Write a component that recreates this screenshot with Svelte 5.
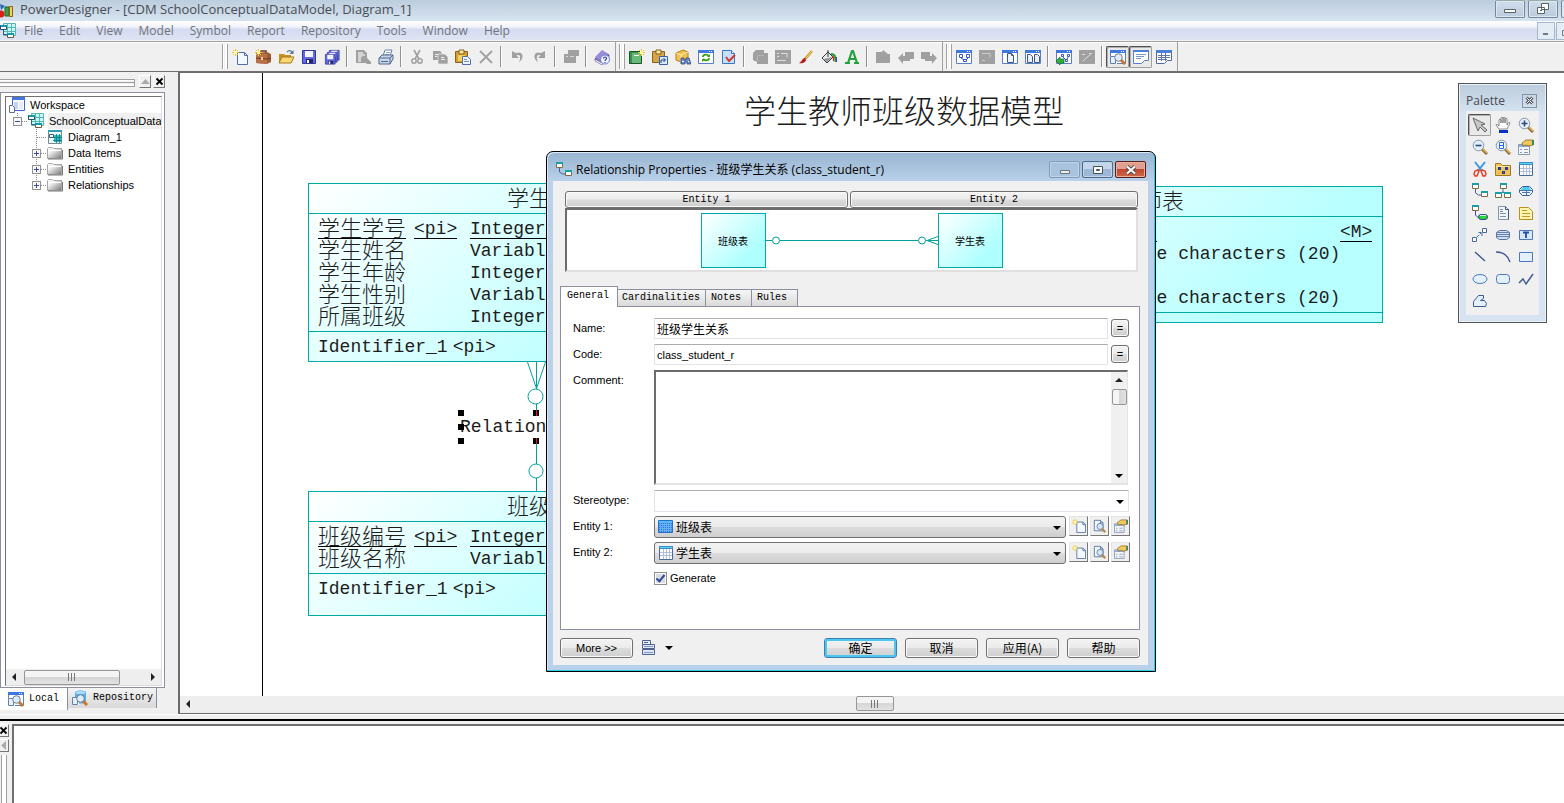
<script>
  const menus = ['File', 'Edit', 'View', 'Model', 'Symbol', 'Report', 'Repository', 'Tools', 'Window', 'Help'];

  const bands = [
    [['new', 'briefcase', 'open', 'save', 'saveAll'], ['preview', 'print'], ['cut', 'copy', 'paste', 'delete'], ['undo', 'redo'], ['props'], ['help']],
    [['model', 'pasteLink', 'find', 'refresh', 'check'], ['shapes', 'image', 'brush', 'fill', 'font'], ['parent', 'back', 'forward']],
    [['diagram', 'grayWin', 'page', 'pages'], ['mapping', 'grayMap'], ['browser', 'output', 'results']]
  ];
  const pressed = ['browser', 'output', 'pointer'];

  const tools = [
    'pointer', 'hand', 'zoomIn', 'zoomOut', 'zoomFit', 'properties', 'scissors', 'package', 'table',
    'relation', 'inherit', 'association', 'assocLink', 'file', 'note', 'link', 'title', 'text',
    'line', 'arc', 'rect', 'ellipse', 'round', 'polyline', 'polygon'
  ];

  const tree = [
    { label: 'Workspace', icon: 'workspace', depth: 0 },
    { label: 'SchoolConceptualDataModel', icon: 'cdm', depth: 1, box: '-', selected: true },
    { label: 'Diagram_1', icon: 'diagramNode', depth: 2 },
    { label: 'Data Items', icon: 'folder', depth: 2, box: '+' },
    { label: 'Entities', icon: 'folder', depth: 2, box: '+' },
    { label: 'Relationships', icon: 'folder', depth: 2, box: '+', last: true }
  ];

  const entities = [
    { cls: 'student', name: '学生表', id: true, rows: [['学生学号', '<pi>', 'Integer', ''], ['学生姓名', '', 'Variable', ''], ['学生年龄', '', 'Integer', ''], ['学生性别', '', 'Variable', ''], ['所属班级', '', 'Integer', '']] },
    { cls: 'class', name: '班级表', id: true, rows: [['班级编号', '<pi>', 'Integer', ''], ['班级名称', '', 'Variable', '']] },
    { cls: 'teacher', name: '教师表', id: false, rows: [['', '', 'Integer', '<M>'], ['', '', 'Variable characters (20)', ''], ['', '', 'Integer', ''], ['', '', 'Variable characters (20)', '']] }
  ];

  const tabs = ['General', 'Cardinalities', 'Notes', 'Rules'];
  const actions = ['确定', '取消', '应用(A)', '帮助'];

  let name = $state('班级学生关系');
  let code = $state('class_student_r');
  let comment = $state('');
  let generate = $state(true);

  const star = '<path d="M3.5 0v7M0 3.5h7M1 1l5 5M6 1l-5 5" stroke="#f0c430"/><path d="M2 2h3v3H2z" fill="#fff8b0"/>';
  const win = '<path d="M.5 1.5h15v13H.5z" fill="#fff" stroke="#5a7fc8"/><path d="M0 1h16v3H0z" fill="#3f77e0"/><path d="M11 2.500h1M13 2.500h1" stroke="#fff"/>';
  const lens = (inner) => `<path d="M10 10l5 5" stroke="#8a6a3a" stroke-width="3"/><path d="M11 10l4 4" stroke="#f0b850" stroke-width="1.4"/><circle cx="6.5" cy="6.5" r="5.3" fill="#e2f0fd" stroke="#8a94a8"/>${inner}`;
  const sheet = '<path d="M.5.5h7l3 3v9H.5z" fill="#f4f8ff" stroke="#5070a8"/><path d="M7.5.5v3h3" fill="none" stroke="#5070a8"/>';
  const disk = '<path d="M.5.5h13v13H.5z" fill="#6468e0" stroke="#34389c"/><path d="M3 1h8v6H3z" fill="#f4f4ff"/><path d="M4 9h7v4H4z" fill="#20286c"/><path d="M5 10h2v3H5z" fill="#fff"/>';
  const box = (x, y) => `<path d="M${x}.5 ${y}.5h6v5h-6z" fill="#fff" stroke="#7c6c48"/><path d="M${x} ${y}h7v2h-7z" fill="#18a0a8"/>`;
  const card = '<path d="M.5 5.500h11v10H.5z" fill="#f4f8fc" stroke="#8898b0"/><path d="M1 6h11v2H1z" fill="#8cacdc"/><path d="M2 10.500h2M6 10.500h4M2 13.500h2M6 13.500h4" stroke="#8a9ab6"/><path d="M4 4l4-3h7v5l-4 1-3-1-3 1z" fill="#f0c860" stroke="#8a6418" stroke-width=".8"/><path d="M14 1h2v5h-2z" fill="#3a8a58"/>';
  const browse = '<path d="M0 7h7v8H0z" fill="#fff"/><path d="M.5 7.500h5v7h-5z" fill="#e8f0fc" stroke="#6080b0"/><path d="M11 11l4 4" stroke="#c87820" stroke-width="3"/><circle cx="8.500" cy="8.500" r="3.800" fill="#dcecfc" stroke="#707c90"/>';

  const icons = {
    new: `<g transform="translate(5 3)">${sheet}</g>${star}`,
    briefcase: `<path d="M6 4V2h5v2" fill="none" stroke="#6c3c20" stroke-width="1.500"/><path d="M1 4l11-1 4 2v8l-4 2-11-1z" fill="#a05c34"/><path d="M1 4l11 1v10L1 14z" fill="#b87048"/><path d="M1 9l11 1 4-1" stroke="#6c3820" fill="none"/><path d="M6 8h2v3H6z" fill="#f0d090"/>${star}`,
    open: '<path d="M1 14V5h5l1 1h6v8z" fill="#c89020"/><path d="M1 14l3-6h12l-3 6z" fill="#ffd874" stroke="#a87818"/><path d="M9 3c2-2 4-2 5 1" stroke="#5a7898" fill="none" stroke-width="1.300"/><path d="M15.500 1v4h-4z" fill="#5a7898"/>',
    save: `<g transform="translate(1 1)">${disk}</g>`,
    saveAll: `<g transform="translate(5 1) scale(.75)">${disk}</g><g transform="translate(3 3) scale(.75)">${disk}</g><g transform="translate(1 5) scale(.75)">${disk}</g>`,
    preview: '<path d="M1 1h8l3 3v5l4 4v2h-4l-1-1H1z" fill="#a0a0a0"/><path d="M3 3h5v2h2v2l-4 3v3H3z" fill="#d4d4d4"/><circle cx="9" cy="10" r="3" fill="#a0a0a0"/>',
    print: '<path d="M5 7l2-6h7l-2 6z" fill="#fff" stroke="#6880a8"/><path d="M8 3.500h4M7 5.500h4" stroke="#90a8d0"/><path d="M1 9l3-3h11v4l-3 5H1z" fill="#c8d8ec" stroke="#50688c"/><path d="M1 9h11l3-3M12 9v6M3 12.500h7" stroke="#50688c" fill="none"/>',
    cut: '<path d="M5 1l5 9M11 1L6 10" stroke="#a0a0a0" stroke-width="1.600"/><circle cx="5" cy="12" r="2.200" fill="none" stroke="#a0a0a0" stroke-width="1.500"/><circle cx="11" cy="12" r="2.200" fill="none" stroke="#a0a0a0" stroke-width="1.500"/>',
    copy: '<path d="M1 2h7l2 2v7H1z" fill="#a0a0a0"/><path d="M6 5h7l3 3v7H6z" fill="#a0a0a0" stroke="#eee" stroke-width=".7"/><path d="M3 5.500h3M3 7.500h2M9 8.500h3M9 10.500h4" stroke="#eee"/>',
    paste: '<path d="M.5 2.500h12v11H.5z" fill="#d89c30" stroke="#8c6418"/><path d="M4 1h5v4H4z" fill="#f8e8a0" stroke="#806020"/><path d="M3 6h7v6H3z" fill="#f8d060"/><path d="M7.500 7.500h5l3 3v5h-8z" fill="#eef4ff" stroke="#5070a8"/><path d="M9 10.500h3M9 12.500h5" stroke="#7890c0"/>',
    delete: '<path d="M2 2l12 12M14 2L2 14" stroke="#a0a0a0" stroke-width="1.800"/>',
    undo: '<path d="M3 2v7h7L7.500 6.500c3-1.500 5 1 2.500 7 6-5 4-12-3-9.500z" fill="#a0a0a0"/>',
    redo: '<path d="M13 2v7H6l2.500-2.500c-3-1.500-5 1-2.500 7-6-5-4-12 3-9.500z" fill="#a0a0a0"/>',
    props: '<path d="M5 1h11v6h-3v7H1V5h4z" fill="#a0a0a0"/><path d="M3 7.500h2M7 7.500h4" stroke="#d8d8d8"/>',
    help: '<path d="M1 10l7-8 7 4-7 9z" fill="#8a78c8" stroke="#584890"/><path d="M1 10l7 4 7-8v2l-7 8-7-4z" fill="#fff" stroke="#584890" stroke-width=".6"/><path d="M1 8l7-7 6 4-6 7z" fill="#9c8cd8"/><circle cx="11" cy="10.500" r="4.500" fill="#f4f4ff" stroke="#6480d0"/><path d="M9.500 9.500c0-2 3-2 3 0 0 1-1.500 1-1.500 2.500M11 13v1" stroke="#2440a8" fill="none" stroke-width="1.200"/>',
    model: `<path d="M.5 2.500h12v12H.5z" fill="#389050" stroke="#185828"/><path d="M3 4h9v10H3z" fill="#68b878"/><path d="M5 6.500h5" stroke="#fff"/><g transform="translate(9 0)">${star}</g>`,
    pasteLink: '<path d="M.5 2.500h12v11H.5z" fill="#d8a448" stroke="#8c6418"/><path d="M4 1h5v4H4z" fill="#f8e8a0" stroke="#806020"/><path d="M7.500 7.500h8v8h-8z" fill="#dce8fc" stroke="#3c60a8"/><path d="M9 14v-3h4M11.500 9l2 2-2 2" stroke="#143c98" fill="none"/>',
    find: '<path d="M1 4l7-3 5 2v7l-7 3-5-2z" fill="#f4c050" stroke="#b88020"/><path d="M1 4l5 2 7-3M6 6v7" stroke="#fff0a8" fill="none"/><path d="M6 9h3v2h2V9h3l2 6h-4v-2h-2v2H6z" fill="#6c90d0" stroke="#20386c" stroke-width=".7"/><path d="M7 12.500h2M13 12.500h1" stroke="#fff"/>',
    refresh: `${win}<path d="M5 8c0-3 4-3 6-1M11 9c0 3-4 3-6 1" stroke="#38a018" stroke-width="1.800" fill="none"/><path d="M12 5v3H9zM4 13v-3h3z" fill="#38a018"/>`,
    check: '<path d="M1.500 1.500h9l3 3v10h-12z" fill="#c4e0fc" stroke="#3878c8"/><path d="M10.500 1.500v3h3" fill="#fff" stroke="#3878c8"/><path d="M5 8l3 4 6-6" stroke="#d03828" stroke-width="2" fill="none"/>',
    shapes: '<path d="M4 1h8v3h4v11H5v-2L1 11V4z" fill="#a0a0a0"/><path d="M5.500 13V6.500h6" fill="none" stroke="#b8b8b8"/>',
    image: '<path d="M0 1h16v14H0z" fill="#a0a0a0"/><path d="M2 4.500h2M2 7.500h2M2 11.500h9M6 4.500h6v4" stroke="#ddd" fill="none"/>',
    brush: '<path d="M14 2l-7 8" stroke="#c89020" stroke-width="2.600"/><path d="M14 2l-6 7" stroke="#f8d878"/><path d="M7 9c-3 0-3 4-6 5 3 1 7-1 7-3z" fill="#b81c14"/>',
    fill: '<path d="M1 9l6-6 5 5-6 6z" fill="#e8ecf0" stroke="#383838"/><path d="M7 8V1" stroke="#383838"/><path d="M2 10l5-1 4-1-5 5z" fill="#909898"/><path d="M10 5c4 0 5 3 4.500 8" stroke="#20a038" stroke-width="2" fill="none"/><path d="M11 7c2 1 2 3 1.500 5" stroke="#d02020" stroke-width="1.400" fill="none"/><path d="M15.500 8v5" stroke="#2848d0"/>',
    font: '<path d="M1 14h5M10 14h5M4 14l4-12h1l4 12M5.500 10h6" stroke="#28a040" stroke-width="2.200" fill="none"/>',
    parent: '<path d="M1 3h6l1-2 5 4h2v9H1z" fill="#a0a0a0"/>',
    back: '<path d="M0 9l5-5v3h2V3h9v7h-4v2H5v3z" fill="#a0a0a0"/>',
    forward: '<path d="M16 9l-5-5v3H9V3H0v7h4v2h7v3z" fill="#a0a0a0"/>',
    diagram: `${win}<path d="M3.500 5.500h3v3h-3zM10.500 5.500h3v3h-3zM7.500 10.500h3v2h-3zM5 9l3 2M12 9l-2 2" fill="#fff" stroke="#3858c8"/>`,
    grayWin: '<path d="M0 1h16v14H0z" fill="#a0a0a0"/><path d="M3 4.500h8v4M3 11.500h3" stroke="#ccc" fill="none"/>',
    page: `${win}<path d="M5.500 4.500h4l2 2v7h-6z" fill="#eef4fc" stroke="#405880"/><path d="M9.500 4.500v2h2" fill="none" stroke="#405880"/>`,
    pages: `${win}<path d="M2.500 5.500h3l2 2v6h-5zM9.500 5.500h3l2 2v6h-5z" fill="#e8f0fa" stroke="#405880"/>`,
    mapping: `${win}<path d="M5.500 5.500h2v2h-2zM11.500 5.500h2v2h-2zM9.500 10.500h2v2h-2zM7 8l3 3M12 8l-1 2" fill="#fff" stroke="#3858c8"/><path d="M0 12l4-4v2h4v4H4v2z" fill="#30b038" stroke="#107018" stroke-width=".7"/>`,
    grayMap: '<path d="M0 1h16v14H0z" fill="#a0a0a0"/><path d="M3 5.500h3M4 12l9-8M10 4.500h2" stroke="#ddd"/>',
    browser: `${win}${browse}`,
    output: '<path d="M.5 1.500h15v10h-4l-3 3h-8z" fill="#fff" stroke="#5a7fc8"/><path d="M0 1h16v2H0z" fill="#4a80d8"/><path d="M3 5.500h10M3 7.500h8M3 9.500h5" stroke="#7898c8"/>',
    results: '<path d="M.5 1.500h15v10h-4l-3 3h-8z" fill="#fff" stroke="#506c9c"/><path d="M0 1h16v3H0z" fill="#4a80d8"/><path d="M2 6.500h12M2 8.500h12M2 10.500h9M5.500 4v8M9.500 4v8" stroke="#6078a8"/>',
    pointer: '<path d="M1 1l12 6-4 1 6 5-2 2-5-5-2 4z" fill="#c8c8c8" stroke="#666"/>',
    hand: '<path d="M4 12L1 8c0-1 1-1 3 1V3c0-1 2-1 2 0v3-5c0-1 2-1 2 0v5-5c0-1 2-1 2 0v5-4c0-1 2-1 2 0v6c1-3 3-3 3-2l-3 6z" fill="#fff" stroke="#444" stroke-width=".6"/><path d="M4 13h9v3H4z" fill="#0830c8"/>',
    zoomIn: lens('<path d="M3.500 6.500h6M6.500 3.500v6" stroke="#304878" stroke-width="1.600"/>'),
    zoomOut: lens('<path d="M3.500 6.500h6" stroke="#304878" stroke-width="1.600"/>'),
    zoomFit: lens('<path d="M4.500 3.500h4v6h-4zM4 6.500h5" stroke="#2868f0" fill="#fff"/>'),
    properties: card,
    scissors: '<path d="M3 1l7 9M13 1L6 10" stroke="#3898e0" stroke-width="2"/><path d="M6 9l-3 1-1 3 1 2h2l2-5zM10 9l3 1 1 3-1 2h-2l-2-5z" fill="none" stroke="#e83820" stroke-width="1.400"/>',
    package: '<path d="M.5 14.500v-12h5l2 2h8v10z" fill="#f0c458" stroke="#a07820"/><path d="M1 5.500h14" fill="none" stroke="#fce8a0"/><path d="M3 6h3v3H3zM10 6h3v3h-3zM7 10h3v3H7z" fill="#2038a0"/><path d="M8 11h1v1H8z" fill="#f04040"/>',
    table: '<path d="M1.500 1.500h13v13h-13z" fill="#fff" stroke="#4868a0"/><path d="M1 1h14v3H1z" fill="#4888c8"/><path d="M2 2h12v1H2z" fill="#48e0f0"/><path d="M2 7.500h12M2 10.500h12M5.500 4v10M8.500 4v10M11.500 4v10" stroke="#b0c0dc"/>',
    relation: `<path d="M3.500 6v4l3 2h3" stroke="#4858a8" fill="none"/>${box(0, 0)}${box(9, 8)}`,
    inherit: `<path d="M8 6v3l-4 2M8 9l4 2M5 9.500h6" stroke="#5078a8" fill="none"/>${box(5, 0)}${box(0, 9)}${box(9, 9)}`,
    association: '<path d="M4.500 3.500h7l3 3v3l-3 3h-7l-3-3v-3z" fill="#e8f8ff" stroke="#3858a0"/><path d="M5 4h6l2 3H3z" fill="#48d0e8"/><path d="M1 7.500h14M4 9.500h8M8.500 7v5" stroke="#5070b0"/>',
    assocLink: `<path d="M3.500 6v4l3 3" stroke="#3848c0" fill="none"/>${box(0, 0)}<rect x="6.500" y="9.500" width="9" height="5" rx="2.500" fill="#28d838" stroke="#384890"/><path d="M8 10.500h6" stroke="#c8f8d0"/>`,
    file: '<path d="M3.500 1.500h7l3 3v10h-10z" fill="#f2f6fc" stroke="#8494ac"/><path d="M5 4.500h3M5 6.500h3M5 8.500h6M5 11.500h6" stroke="#8090a8"/><path d="M10.500 1.500v3h3v10" stroke="#46566c" fill="none"/>',
    note: '<path d="M1.500 2.500h9l4 4v8h-13z" fill="#fff4b0" stroke="#b89020"/><path d="M4 5.500h5M4 8.500h8M4 11.500h8" stroke="#c09828"/>',
    link: '<path d="M.5 10.500h4v4h-4zM10.500 1.500h4v4h-4z" fill="#fff" stroke="#4868a8"/><path d="M5 10l4-4M6.500 5.500H10V9" stroke="#4868a8" fill="none" stroke-dasharray="3 1"/>',
    title: '<path d="M4.500 3.500h7l3 2v5l-3 2h-7l-3-2v-5z" fill="#d0e0f4" stroke="#5870a0"/><path d="M2 5.500h12M2 7.500h12M2 9.500h12" stroke="#6880b0"/>',
    text: '<path d="M1.500 3.500h13v9h-13z" fill="#d8e8fc" stroke="#5078b8"/><path d="M5 5.500h6M8 5v6" stroke="#2050a0" stroke-width="1.800"/>',
    line: '<path d="M3 3l10 9" stroke="#3c5890" stroke-width="1.400"/>',
    arc: '<path d="M1 3c8 0 12 4 14 10" stroke="#3c5890" stroke-width="1.400" fill="none"/>',
    rect: '<path d="M1.500 3.500h13v9h-13z" fill="#e4f0fc" stroke="#4878c0"/>',
    ellipse: '<ellipse cx="8" cy="8" rx="7" ry="4.500" fill="#e4f0fc" stroke="#4878c0"/>',
    round: '<rect x="1.500" y="3.500" width="13" height="9" rx="3" fill="#e4f0fc" stroke="#4878c0"/>',
    polyline: '<path d="M1 12l4-4 3 5 7-10" stroke="#3c5890" stroke-width="1.400" fill="none"/>',
    polygon: '<path d="M1.500 13.500v-5l5-6h5v3l-3 2h4l2 3-1 3z" fill="#e4f0fc" stroke="#3c5890"/>',
    workspace: '<path d="M3.500.5h12v13h-12z" fill="#fff" stroke="#3868d0"/><path d="M3 0h13v3H3z" fill="#3f77e0"/><path d="M5 5h4v7H5z" fill="#c4d4ec"/><path d="M10 5h4v7h-4z" fill="#e4ecf8"/><path d="M.5 8.500h3l2 2v5h-5z" fill="#fff" stroke="#607090"/>',
    cdm: '<path d="M3.500.5h12v12h-12z" fill="#c8fcf8" stroke="#58b8b0"/><path d="M7.500 1v11M11.500 1v11M4 4.500h11M4 8.500h11" stroke="#58b8b0"/><path d="M3.500 7v4.500h4" stroke="#385890" fill="none"/><path d="M.5 2.500h6v4h-6z" fill="#fff" stroke="#204878"/><path d="M7.500 10.500h6v4h-6z" fill="#fff" stroke="#685840"/><path d="M1 2h6v2H1zM7 10h7v2H7z" fill="#1898b0"/>',
    diagramNode: '<path d="M1.500 1.500h13v13h-13z" fill="#e8fcfc" stroke="#7c8890"/><path d="M1 1h14v2H1z" fill="#309cb0"/><path d="M2.500 5.500h4v3h-4z" fill="#fff" stroke="#386078"/><path d="M7 6h7v7H7z" fill="#28c0c0"/><path d="M6 8.500h9M6 11.500h9M9.500 5v9M12.500 5v9" stroke="#087880" stroke-width=".8"/>',
    folder: '<path d="M.5 13.500v-10l1-1h4l1 1h8v10z" fill="url(#folderShade)" stroke="#a8a8a8"/><path d="M1 5.500h13" stroke="#fff"/><path d="M15.500 5v9H1" stroke="#777" fill="none"/>',
    searchLocal: `${win}${browse}`,
    searchRepo: `<path d="M3 2c2-2 9-2 11 0v10c-2 2-9 2-11 0z" fill="#58b0e8"/><ellipse cx="8.500" cy="2.500" rx="5" ry="1.500" fill="#a8dcf8"/>${browse}`,
    app: '<path d="M5 4h4v9H5z" fill="#38a048" stroke="#186828"/><path d="M9.500 3.500h3v10h-3z" fill="#f0d060" stroke="#906010"/><path d="M0 1l5 2-4 4z" fill="#2868b0"/><circle cx="1" cy="11" r="3.500" fill="#d82018"/>',
    hatched: '<path d="M.5 1.500h14v12H.5z" fill="#68b0f8" stroke="#2870d0"/><path d="M1 4.500h13M1 6.500h13M1 8.500h13M1 10.500h13M1 12.500h13" stroke="#2478e0" stroke-dasharray="1 1"/><path d="M1 2.500h13" stroke="#38d8f8" stroke-dasharray="1 1"/>',
    inspect: `<g transform="translate(1 1)">${sheet}</g><path d="M10 11l4 4" stroke="#c08840" stroke-width="2.500"/><circle cx="8" cy="8.500" r="3.500" fill="#d4e8fc" stroke="#687c98"/>`,
    report: '<path d="M1.500.5h8v4h-8z" fill="#e8eef8" stroke="#506090"/><path d="M3 2.500h4" stroke="#506090"/><path d="M1.500 4.500h12v4h-12zM1.500 9.500h12v5h-12z" fill="#dce6f4" stroke="#506090"/><path d="M3 6.500h9M3 12.500h9" stroke="#8498c8"/>'
  };
</script>

{#snippet icon(id)}
  <svg class="icon" viewBox="0 0 16 16" aria-hidden="true">{@html icons[id]}</svg>
{/snippet}

{#snippet gripMarks()}
  <svg class="marks" viewBox="0 0 8 8" aria-hidden="true"><path d="M.5 0v8M3.5 0v8M6.5 0v8" stroke="#777" /></svg>
{/snippet}

<svg class="defs" aria-hidden="true">
  <linearGradient id="folderShade" x1="0" y1="0" x2="1" y2="1"><stop offset=".3" stop-color="#f4f4f4" /><stop offset="1" stop-color="#787878" /></linearGradient>
</svg>

<div class="app">
  <header class="titlebar">
    {@render icon('app')}
    <span class="caption">PowerDesigner - [CDM SchoolConceptualDataModel, Diagram_1]</span>
    <div class="winbuttons">
      <button aria-label="Minimize"><svg viewBox="0 0 14 12"><path d="M1.500 6.500h11v3h-11z" fill="#fff" stroke="#566" /></svg></button>
      <button aria-label="Restore"><svg viewBox="0 0 14 12"><path d="M5.500.5h7v6h-7zM1.500 4.500h7v6h-7z" fill="#fff" stroke="#566" /><path d="M4 7.500h2" stroke="#566" /></svg></button>
      <button class="cut-off" aria-label="Close"></button>
    </div>
  </header>

  <nav class="menubar">
    {@render icon('cdm')}
    {#each menus as m}<button>{m}</button>{/each}
    <div class="mdi">
      <button aria-label="Minimize diagram"><svg viewBox="0 0 14 12"><path d="M5 9h5" stroke="#778" stroke-width="2" /></svg></button>
      <button class="cut-off" aria-label="Restore diagram"><svg viewBox="0 0 14 12"><path d="M5.500 5.500h6v5h-6z" fill="none" stroke="#778" /></svg></button>
    </div>
  </nav>

  <div class="toolbar">
    {#each bands as band}
      <div class="band">
        <span class="grip"></span>
        {#each band as group}
          <div class="group">
            {#each group as id}
              <button class="tool" class:pressed={pressed.includes(id)} aria-label={id}>{@render icon(id)}</button>
            {/each}
          </div>
        {/each}
      </div>
    {/each}
  </div>

  <main class="workarea">
    <aside class="panel">
      <div class="panel-head">
        <span class="drag"></span>
        <button aria-label="Collapse"><svg viewBox="0 0 9 9"><path d="M0 7l4.500-5L9 7z" fill="#aaa" /></svg></button>
        <button aria-label="Close panel"><svg viewBox="0 0 9 9"><path d="M1.500 1.500l6 6M7.500 1.500l-6 6" stroke="#000" stroke-width="1.800" /></svg></button>
      </div>
      <div class="tree-frame">
        <div class="tree-well">
          <ul class="tree">
            {#each tree as n}
              <li>
                {#if n.depth === 2}<span class="pad"></span>{/if}
                {#if n.depth > 0}
                  <svg class="twist" viewBox="0 0 19 16" aria-hidden="true">
                    <path d={n.last || n.depth === 1 ? 'M8.500 0v8' : 'M8.500 0v16'} stroke="#888" stroke-dasharray="1 1" />
                    <path d="M9 8.500h10" stroke="#888" stroke-dasharray="1 1" />
                    {#if n.box}
                      <rect x="4.500" y="4.500" width="8" height="8" fill="#f8f8f8" stroke="#919191" />
                      <path d={n.box === '+' ? 'M6 8.500h5M8.500 6v5' : 'M6 8.500h5'} stroke="#3850a0" />
                    {/if}
                  </svg>
                {/if}
                {@render icon(n.icon)}
                <span class="node" class:selected={n.selected}>{n.label}</span>
              </li>
            {/each}
          </ul>
          <div class="hscroll">
            <button aria-label="Scroll left"><i class="tri left"></i></button>
            <span class="thumb wide">{@render gripMarks()}</span>
            <button class="end" aria-label="Scroll right"><i class="tri right"></i></button>
          </div>
        </div>
      </div>
      <div class="panel-tabs">
        <button class="active">{@render icon('searchLocal')}Local</button>
        <button>{@render icon('searchRepo')}Repository</button>
      </div>
    </aside>

    <section class="diagram">
      <div class="canvas">
        <h1>学生教师班级数据模型</h1>
        <svg class="links" viewBox="0 0 120 130" aria-hidden="true">
          <g fill="none" stroke="#00a0a0">
            <path d="M67.500 0L76.500 26.500L85.500 0M76.500 0v26.500M76.500 42v7M76.500 76v26M76.500 116v14" />
            <circle cx="75.500" cy="34.500" r="7.500" /><circle cx="76" cy="109" r="7" />
          </g>
        </svg>
        <div class="link-label">Relationship_1
          <svg viewBox="0 0 84 36" aria-hidden="true">
            <path d="M0 2h6v6H0zM0 16h6v6H0zM0 30h6v6H0zM75 2h6v6h-6zM75 30h6v6h-6z" />
            <path d="M78.500 2v6M78.500 30v6" stroke="#e02020" />
          </svg>
        </div>
        {#each entities as e}
          <article class="entity {e.cls}">
            <h2>{e.name}</h2>
            <div class="attrs">
              {#each e.rows as r, i}
                <div class="attr" class:key={i === 0}>
                  <span>{#if r[0]}<b>{r[0]}</b>{/if}</span><span>{#if r[1]}<em>{r[1]}</em>{/if}</span><span><em>{r[2]}</em></span><span>{#if r[3]}<em>{r[3]}</em>{/if}</span>
                </div>
              {/each}
            </div>
            <div class="ids">{#if e.id}<span>Identifier_1</span><span>&lt;pi&gt;</span>{/if}</div>
          </article>
        {/each}
      </div>
      <div class="hscroll base">
        <button aria-label="Scroll diagram left"><i class="tri left"></i></button>
        <span class="thumb">{@render gripMarks()}</span>
      </div>
    </section>
  </main>

  <footer class="outdock">
    <div class="out-side">
      <button aria-label="Close output"><svg viewBox="0 0 9 9"><path d="M1.500 1.500l6 6M7.500 1.500l-6 6" stroke="#000" stroke-width="1.800" /></svg></button>
      <button aria-label="Collapse output"><svg viewBox="0 0 9 9"><path d="M7 0v9L2 4.500z" fill="#aaa" /></svg></button>
      <span></span>
    </div>
    <div class="out-text"></div>
  </footer>

  <aside class="palette">
    <header>Palette <button aria-label="Close palette"><svg viewBox="0 0 9 9"><path d="M1.500 1.500l6 6M7.500 1.500l-6 6" stroke="#556" stroke-width="3" /><path d="M1.500 1.500l6 6M7.500 1.500l-6 6" stroke="#fff" /></svg></button></header>
    <div class="tools">
      {#each tools as id}
        <button class="tool" class:pressed={pressed.includes(id)} aria-label={id}>{@render icon(id)}</button>
      {/each}
    </div>
  </aside>

  <div class="dialog" role="dialog" aria-labelledby="dlg-title">
    <header>
      {@render icon('relation')}
      <span id="dlg-title">Relationship Properties - 班级学生关系 (class_student_r)</span>
      <div class="dlg-buttons">
        <button aria-label="Minimize dialog"><svg viewBox="0 0 14 12"><path d="M2.500 6.500h9v3h-9z" fill="#eee" stroke="#677" /></svg></button>
        <button class="max" aria-label="Maximize dialog"><svg viewBox="0 0 14 12"><path d="M2.500 2.500h9v7h-9z" fill="#fff" stroke="#455" /><path d="M5.500 5.500h3v1h-3z" fill="#fff" stroke="#455" /></svg></button>
        <button class="close" aria-label="Close dialog"><svg viewBox="0 0 14 12"><path d="M3 2.500l8 7M11 2.500l-8 7" stroke="#544" stroke-width="4" /><path d="M3 2.500l8 7M11 2.500l-8 7" stroke="#fff" stroke-width="2.200" /></svg></button>
      </div>
    </header>
    <div class="client">
      <div class="ends">
        <button class="btn">Entity 1</button>
        <button class="btn">Entity 2</button>
      </div>
      <div class="preview">
        <div class="mini">班级表</div>
        <svg viewBox="0 0 172 20" aria-hidden="true">
          <g fill="none" stroke="#00a0a0"><path d="M0 10.500h6M14 10.500h138M160 10.500h12M161 10.500l11-4M161 10.500l11 4" /><circle cx="10" cy="10.500" r="3.500" /><circle cx="156" cy="10.500" r="3.500" /></g>
        </svg>
        <div class="mini">学生表</div>
      </div>

      <div class="tabs" role="tablist">
        {#each tabs as t, i}<button role="tab" aria-selected={i === 0} class:active={i === 0}>{t}</button>{/each}
      </div>
      <div class="sheet">
        <div class="row"><label for="f-name">Name:</label><input id="f-name" class="cjk" bind:value={name} /><button class="btn eq">=</button></div>
        <div class="row"><label for="f-code">Code:</label><input id="f-code" bind:value={code} /><button class="btn eq">=</button></div>
        <div class="row comment">
          <label for="f-comment">Comment:</label>
          <div class="memo">
            <textarea id="f-comment" bind:value={comment}></textarea>
            <div class="vscroll"><i class="tri up"></i><span class="vthumb"></span><i class="tri down"></i></div>
          </div>
        </div>
        <div class="row">
          <label for="f-stereo">Stereotype:</label>
          <div class="combo plain"><select id="f-stereo"><option></option></select><i class="tri down"></i></div>
        </div>
        <div class="row">
          <label for="f-e1">Entity 1:</label>
          <div class="combo">{@render icon('hatched')}<select id="f-e1"><option>班级表</option><option>学生表</option></select><i class="tri down"></i></div>
          {#each ['new', 'inspect', 'properties'] as id}<button class="side" aria-label={'entity 1 ' + id}>{@render icon(id)}</button>{/each}
        </div>
        <div class="row">
          <label for="f-e2">Entity 2:</label>
          <div class="combo">{@render icon('table')}<select id="f-e2"><option>学生表</option><option>班级表</option></select><i class="tri down"></i></div>
          {#each ['new', 'inspect', 'properties'] as id}<button class="side" aria-label={'entity 2 ' + id}>{@render icon(id)}</button>{/each}
        </div>
        <label class="generate"><input type="checkbox" bind:checked={generate} />Generate</label>
      </div>

      <div class="actions">
        <button class="btn">More &gt;&gt;</button>
        <button class="report" aria-label="Report">{@render icon('report')}<i class="tri down"></i></button>
        <span class="fill"></span>
        {#each actions as a, i}<button class="btn cjk" class:default={i === 0}>{a}</button>{/each}
      </div>
    </div>
  </div>
</div>

<style>
  :global(body) { margin: 0; overflow: hidden; }
  * { box-sizing: border-box; }
  button { font: inherit; color: inherit; padding: 0; margin: 0; border: 0; background: none; }
  .defs { position: absolute; width: 0; height: 0; }
  .app {
    position: relative; display: flex; flex-direction: column; height: 100vh; overflow: hidden;
    background: #f0f0f0; color: #000; font: 11px/16px "Liberation Sans", "Noto Sans CJK SC", sans-serif;
  }
  .icon { width: 16px; height: 16px; flex: none; display: block; }
  .marks { width: 8px; height: 8px; }
  .tri { width: 0; height: 0; border: 4px solid transparent; display: block; }
  .tri.down { border-top-color: #000; border-bottom: 0; }
  .tri.up { border-bottom-color: #222; border-top: 0; }
  .tri.left { border-right-color: #222; border-left: 0; }
  .tri.right { border-left-color: #222; border-right: 0; }

  .titlebar { display: flex; align-items: center; height: 21px; flex: none; background: linear-gradient(#bccddd, #d7e3f0); color: #484c54; font: 13px/18px "Open Sans", sans-serif; overflow: hidden; }
  .caption { margin-left: 4px; flex: 1; white-space: nowrap; height: 21px; }
  .winbuttons { display: flex; gap: 3px; align-self: flex-start; }
  .winbuttons button { width: 30px; height: 18px; border: 1px solid #75879c; border-top-color: #9aa; border-radius: 2px; background: linear-gradient(#d0dcea, #bccbdc); box-shadow: inset 0 0 0 1px #dde7f2; display: grid; place-items: center; }
  .winbuttons svg, .dlg-buttons svg { width: 14px; height: 12px; }
  .winbuttons .cut-off { width: 3px; border-right: 0; border-radius: 2px 0 0 2px; }

  .menubar { display: flex; align-items: center; gap: 16px; height: 20px; flex: none; background: linear-gradient(#fff, #f2f4fb 30%, #d5dbf0 45%, #dfe4f4); border-bottom: 1px solid #f4f4f8; color: #70747c; font: 12px/18px "Open Sans", sans-serif; }
  .menubar > .icon { margin-right: -8px; }
  .mdi { margin-left: auto; display: flex; gap: 1px; }
  .mdi button { width: 18px; height: 18px; border: 1px solid #a8b8cc; background: #e4ecf6; }
  .mdi svg { width: 14px; height: 12px; display: block; }
  .mdi .cut-off { width: 8px; overflow: hidden; border-right: 0; }

  .toolbar { display: flex; height: 31px; flex: none; padding-left: 222px; border-top: 1px solid #a0a0a0; border-bottom: 1px solid #707070; box-shadow: inset 0 1px #fff; }
  .band { display: flex; align-items: center; border-right: 1px solid #a0a0a0; padding-right: 2px; margin-right: 3px; }
  .grip { width: 6px; height: 25px; border: solid #a0a0a0; border-width: 0 1px; box-shadow: inset 1px 0 #fff, inset -2px 0 #fff; }
  .group { display: flex; align-items: center; }
  .group + .group::before { content: ""; width: 2px; height: 21px; margin: 0 3px; background: linear-gradient(90deg, #909090 50%, #fff 50%); }
  .tool { width: 23px; height: 22px; display: grid; place-items: center; border: 1px solid transparent; }
  .tool.pressed { border-color: #505050 #a0a0a0 #a0a0a0 #505050; background: #e9e9e9; border-radius: 2px; box-shadow: inset 1px 1px #b0b0b0; }

  .workarea { display: flex; flex: 1; min-height: 0; }
  .panel { width: 178px; flex: none; display: flex; flex-direction: column; padding: 3px 13px 3px 0; }
  .panel-head { display: flex; gap: 2px; height: 17px; }
  .drag { flex: 1; height: 8px; margin: 4px 2px 0 0; border: solid #a0a0a0; border-width: 1px 1px 1px 0; box-shadow: inset 0 1px #fff, inset 0 -2px #fff; }
  .drag::after { content: ""; display: block; height: 1px; margin-top: 2px; background: #a0a0a0; }
  .panel-head button, .out-side button { width: 12px; height: 13px; display: grid; place-items: center; border: solid; border-width: 1px; border-color: #fff #777 #777 #fff; }
  .panel-head svg, .out-side svg { width: 9px; height: 9px; }
  .tree-frame { flex: 1; min-height: 0; display: flex; border: 1px solid #8b8fa0; background: #fff; padding: 3px 2px 1px 4px; }
  .tree-well { flex: 1; min-width: 0; display: flex; flex-direction: column; border: 1px solid; border-color: #707070 #ddd #ddd #707070; }
  .tree { flex: 1; list-style: none; margin: 0; padding: 0 0 0 3px; overflow: hidden; }
  .tree li { display: flex; height: 16px; white-space: nowrap; }
  .pad { width: 19px; flex: none; }
  .twist { width: 19px; height: 16px; flex: none; }
  .node { margin-left: 4px; padding: 0 1px; }
  .node.selected { background: #f0f0f0; }
  .hscroll { display: flex; align-items: center; height: 16px; flex: none; background: #eee; }
  .hscroll button { width: 16px; height: 16px; display: grid; place-items: center; }
  .hscroll .end { margin-left: auto; }
  .thumb { width: 38px; height: 15px; border: 1px solid #979797; border-radius: 2px; background: linear-gradient(#f4f4f4 45%, #d6d6d6 50%, #e2e2e2); display: grid; place-items: center; }
  .thumb.wide { width: 96px; margin-left: 2px; }
  .base { height: 17px; align-items: flex-start; }
  .base .thumb { margin: 0 auto 0 calc(48% - 4px); }
  .panel-tabs { display: flex; height: 23px; font: 10px/16px "Liberation Mono", monospace; }
  .panel-tabs button { display: flex; align-items: center; gap: 5px; height: 20px; padding: 0 3px 0 4px; border-right: 1px solid #8b8fa0; background: linear-gradient(#f4f4f4, #d8d8d8); white-space: nowrap; }
  .panel-tabs .active { height: 22px; padding: 0 8px; background: #fff; }

  .diagram { flex: 1; min-width: 0; display: flex; flex-direction: column; border: solid #6c6c6c; border-width: 1px 0 1px 2px; background: #fff; }
  .canvas { position: relative; flex: 1; overflow: hidden; color: #1c1c1c; }
  .canvas::before { content: ""; position: absolute; left: 82px; top: 0; bottom: 0; border-left: 1px solid #000; }
  .canvas h1 { position: absolute; left: 564px; top: 12px; margin: 0; font: 300 32px/48px "Noto Sans CJK SC", sans-serif; white-space: nowrap; }
  .entity { position: absolute; width: 464px; border: 1px solid #00a8a8; background: linear-gradient(135deg, #fff, #b8ffff 75%); font: 18px/22px "Liberation Mono", monospace; }
  .student { left: 128px; top: 110px; }
  .class { left: 128px; top: 418px; }
  .teacher { left: 739px; top: 113px; }
  .entity h2 { margin: 0; height: 29px; font: 300 22px/24px "Noto Sans CJK SC", sans-serif; text-align: center; }
  .attrs { border: solid #00a8a8; border-width: 1px 0; padding: 4px 0 3px 9px; }
  .attr { display: grid; grid-template-columns: 96px 56px 259px 1fr; height: 22px; white-space: nowrap; }
  .attr b, .attr em { display: block; width: fit-content; height: 21px; font-style: normal; }
  .attr b { font: 300 22px/16px "Noto Sans CJK SC", sans-serif; }
  .attr.key b, .attr.key em { border-bottom: 1px solid #000; }
  .ids { display: flex; gap: 5px; height: 29px; padding: 4px 0 0 9px; }
  .class .ids { height: 41px; }
  .teacher .ids { height: 9px; }
  .links { position: absolute; left: 280px; top: 289px; width: 120px; height: 130px; }
  .link-label { position: absolute; left: 280px; top: 343px; font: 18px/22px "Liberation Mono", monospace; white-space: nowrap; }
  .link-label svg { position: absolute; left: -2px; top: -8px; width: 84px; height: 36px; }

  .outdock { height: 89px; flex: none; display: flex; border-top: 1px solid #fff; box-shadow: inset 0 4px #f0f0f0, inset 0 6px #000; padding-top: 9px; }
  .out-side { width: 12px; display: flex; flex-direction: column; gap: 2px; margin-left: -3px; }
  .out-side span { flex: 1; width: 6px; margin: 1px 0 0 4px; border: solid #a0a0a0; border-width: 0 1px; background: #fff; }
  .out-text { flex: 1; margin-left: 3px; background: #fff; border: solid #707070; border-width: 2px 0 0 2px; }

  .palette { position: absolute; right: 17px; top: 83px; width: 89px; height: 240px; padding: 0 7px 7px; display: flex; flex-direction: column; border: 1px solid #555; background: linear-gradient(#bccddd, #d7e3f0 30px); box-shadow: inset 0 0 0 1px #e8f0f8; }
  .palette header { display: flex; align-items: center; justify-content: space-between; height: 27px; padding-top: 6px; color: #484c54; font: 12px/18px "Open Sans", sans-serif; }
  .palette header button { width: 15px; height: 14px; margin-right: 2px; border: 1px solid #8593a5; display: grid; place-items: center; }
  .palette header svg { width: 9px; height: 9px; }
  .tools { flex: 1; display: grid; grid-template-columns: repeat(3, 23px); grid-auto-rows: 22px; padding: 3px 2px; background: #f0f0f0; }

  .dialog { position: absolute; left: 546px; top: 151px; width: 610px; height: 521px; padding: 0 7px 6px 6px; display: flex; flex-direction: column; border: 1px solid #000; border-radius: 7px 7px 0 0; background: linear-gradient(#98b4d0, #b9d1ea 29px); box-shadow: inset -1px -1px #28d0e8, inset 1px 1px #dce9f6; }
  .dialog header { display: flex; align-items: center; height: 29px; flex: none; padding: 6px 2px 0 3px; gap: 4px; font: 12px/18px "Open Sans", "Noto Sans CJK SC", sans-serif; white-space: nowrap; }
  .dlg-buttons { display: flex; gap: 2px; margin-left: auto; }
  .dlg-buttons button { width: 31px; height: 17px; border: 1px solid #7f9ab8; border-radius: 2px; display: grid; place-items: center; background: #a9c3de; box-shadow: inset 0 0 0 1px #c0d4e8; }
  .dlg-buttons .max { border-color: #4f6c8c; background: linear-gradient(#c4d6ea 45%, #9cb8d6 50%); }
  .dlg-buttons .close { border-color: #5a1c18; background: linear-gradient(#e0a090 45%, #c04830 50%, #d06848); box-shadow: inset 0 0 0 1px #e8b0a0; }
  .client { flex: 1; display: flex; flex-direction: column; padding: 10px 8px 7px 7px; background: #f0f0f0; }
  .btn { border: 1px solid #707070; border-radius: 3px; background: linear-gradient(#f3f3f3, #ebebeb 48%, #dcdcdc 52%, #cfcfcf); box-shadow: inset 0 0 0 1px #fafafa; }
  .ends { display: grid; grid-template-columns: 283px 1fr; gap: 2px; margin: 0 2px 0 5px; font: 10px/14px "Liberation Mono", monospace; }
  .ends .btn { height: 17px; }
  .preview { display: flex; align-items: center; justify-content: center; height: 64px; margin: 0 2px 14px 5px; border: 2px solid; border-color: #6c6c6c #e0e0e0 #e0e0e0 #6c6c6c; background: #fff; }
  .preview svg { width: 172px; height: 20px; }
  .mini { width: 65px; height: 55px; border: 1px solid #00a8a8; background: linear-gradient(135deg, #fff, #b0ffff 75%); font: 10px/53px "Noto Sans CJK SC", sans-serif; text-align: center; }
  .tabs { display: flex; align-items: flex-end; height: 20px; font: 10px/16px "Liberation Mono", monospace; }
  .tabs button { height: 17px; padding: 0 10px 0 5px; border: solid #8b8fa0; border-width: 1px 1px 0 0; background: linear-gradient(#f6f6f6, #dadada); }
  .tabs button:nth-child(2) { padding: 0 5px 0 4px; }
  .tabs .active { position: relative; z-index: 1; height: 21px; margin-bottom: -1px; padding: 0 8px 2px 6px; border-left-width: 1px; background: #fff; }
  .sheet { flex: 1; display: flex; flex-direction: column; gap: 5px; padding: 11px 9px 0 12px; border: 1px solid #8b8fa0; background: #fff; }
  .row { display: flex; align-items: flex-start; gap: 2px; height: 21px; }
  .row label { width: 79px; padding-top: 2px; }
  .row > input { flex: 1; height: 21px; border: 1px solid #e2e3ea; border-top-color: #abadb3; border-radius: 1px; padding: 0 2px; font: inherit; background: #fff; min-width: 0; }
  .row > input.cjk { font: 12px/18px "Noto Sans CJK SC", sans-serif; }
  .eq { width: 18px; height: 18px; margin: 1px 1px 0; line-height: 14px; }
  .comment { height: 115px; }
  .memo { flex: 1; align-self: stretch; display: flex; border: 2px solid; border-color: #6c6c6c #e4e4e4 #e4e4e4 #6c6c6c; border-right-width: 1px; margin-right: 2px; }
  .memo textarea { flex: 1; min-width: 0; border: 0; padding: 2px; resize: none; font: inherit; background: #fff; overflow: hidden; }
  .vscroll { width: 16px; display: flex; flex-direction: column; align-items: center; background: #f0f0f0; padding: 6px 0 5px; }
  .vthumb { width: 15px; height: 16px; margin: 7px 0 auto; border: 1px solid #979797; border-radius: 2px; background: linear-gradient(90deg, #f4f4f4 45%, #d6d6d6 50%, #e2e2e2); }
  .combo { position: relative; flex: 1; height: 22px; border: 1px solid #707070; border-radius: 3px; background: linear-gradient(#f3f3f3, #ebebeb 48%, #dcdcdc 52%, #cfcfcf); margin-right: 1px; }
  .combo .icon { position: absolute; left: 3px; top: 2px; }
  .combo .tri { position: absolute; right: 4px; top: 9px; pointer-events: none; }
  .combo select { display: block; width: 100%; height: 20px; appearance: none; border: 0; background: transparent; padding: 0 0 0 21px; font: 12px/20px "Noto Sans CJK SC", sans-serif; color: #000; }
  .combo.plain { border-color: #abadb3 #e2e3ea #e2e3ea; background: #fff; border-radius: 1px; }
  .side { width: 19px; height: 20px; display: grid; place-items: center; border: 1px solid; border-color: #e4e4e4 #777 #777 #e4e4e4; background: #f0f0f0; }
  .side .icon { width: 14px; height: 14px; }
  .generate { display: flex; align-items: center; gap: 3px; margin: 2px 0 0 81px; height: 16px; }
  .generate input { appearance: none; width: 13px; height: 13px; margin: 0; border: 1px solid #8e8f8f; box-shadow: inset 0 0 0 1px #fff; background: #d8dce4; display: grid; place-items: center; }
  .generate input:checked::after { content: ""; width: 3px; height: 7px; margin-top: -2px; border: solid #304890; border-width: 0 2px 2px 0; transform: rotate(40deg); }
  .actions { display: flex; align-items: center; gap: 8px; padding-top: 8px; }
  .actions .btn { width: 73px; height: 20px; line-height: 17px; }
  .actions .cjk { font: 12px/16px "Noto Sans CJK SC", sans-serif; }
  .actions .default { border-color: #3c7fb1; box-shadow: inset 0 0 0 2px #4cc8f0; }
  .report { display: flex; align-items: center; gap: 8px; }
  .fill { flex: 1; }
</style>
